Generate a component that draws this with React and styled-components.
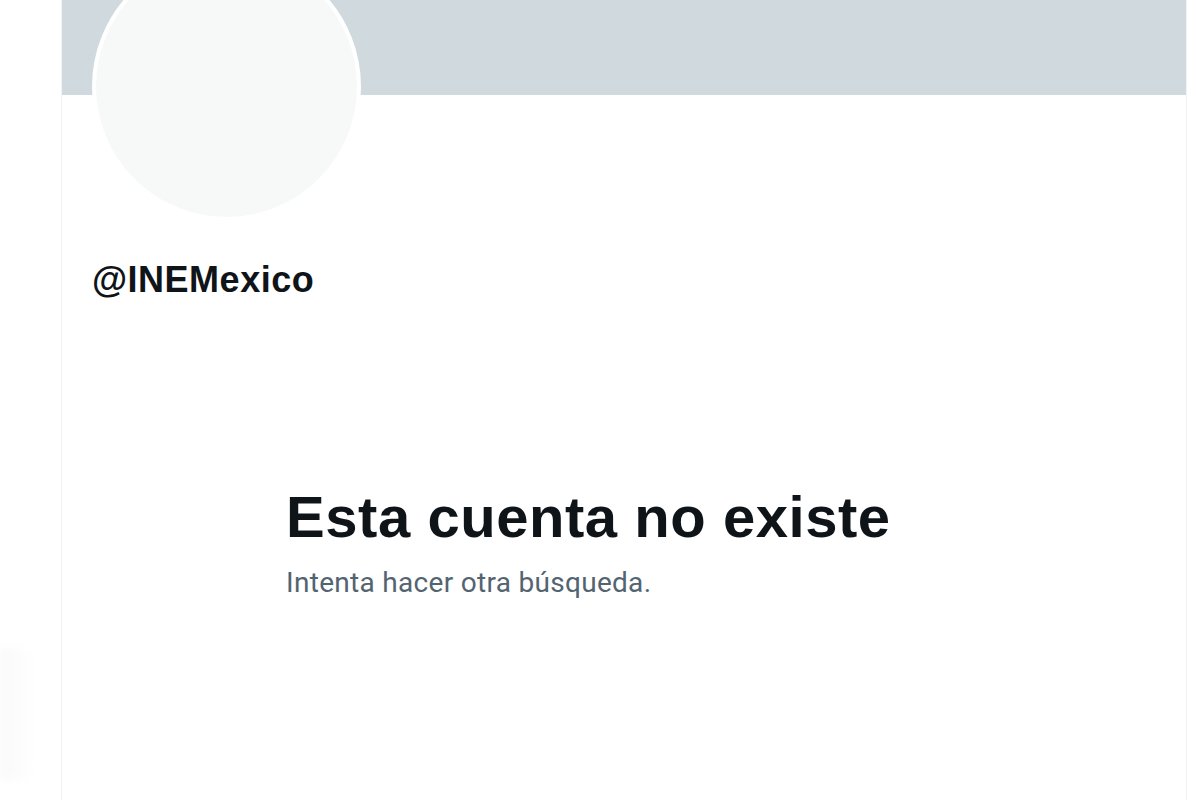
import React from 'react'
import styled, { createGlobalStyle } from 'styled-components'

const GlobalStyle = createGlobalStyle`
    html, body {
        margin:0;
        padding:0;
        background:#ffffff;
    }
    body {
        font-family:"Liberation Sans", Arial, sans-serif;
        color:#0f1419;
    }
`

const Page = styled.div`
    display:flex;
    width:1200px;
    height:800px;
    overflow:hidden;
    background:#ffffff;
`

const Gutter = styled.div`
    width:61px;
    flex-shrink:0;
    display:flex;
    flex-direction:column;
    padding-top:648px;
    box-sizing:border-box;
`

const GhostItem = styled.div`
    width:34px;
    height:132px;
    border-radius:0 14px 14px 0;
    background:linear-gradient(90deg, #f9f9f9, #fdfdfd 70%, #ffffff);
    filter:blur(4px);
`

const Column = styled.main`
    width:1126px;
    flex-shrink:0;
    border-left:1px solid #eff3f4;
    border-right:1px solid #eff3f4;
    box-sizing:border-box;
    display:flex;
    flex-direction:column;
`

const Banner = styled.div`
    height:95px;
    background:#cfd9de;
`

const ProfileHead = styled.div`
    padding-left:30px;
    display:flex;
    flex-direction:column;
    align-items:flex-start;
`

const Avatar = styled.div`
    width:269px;
    height:269px;
    margin-top:-143px;
    border:4px solid #ffffff;
    border-radius:50%;
    background:#f7f9f9;
    box-sizing:border-box;
`

const Handle = styled.h2`
    margin:37px 0 0 0;
    font-size:36px;
    line-height:1.2;
    font-weight:700;
    letter-spacing:0.5px;
    color:#0f1419;
`

const EmptyState = styled.section`
    margin-top:181px;
    padding-left:224px;
    display:flex;
    flex-direction:column;
`

const Title = styled.h1`
    margin:0;
    font-size:58px;
    line-height:1.2;
    font-weight:700;
    color:#0f1419;
    letter-spacing:0.55px;
`

const Subtitle = styled.p`
    margin:14px 0 0 0;
    font-family:Roboto, "Liberation Sans", Arial, sans-serif;
    font-size:28px;
    line-height:1.2;
    letter-spacing:0.3px;
    color:#536471;
`

const App = () => {
  return (
    <>
      <GlobalStyle />
      <Page>
        <Gutter>
          <GhostItem />
        </Gutter>
        <Column>
          <Banner />
          <ProfileHead>
            <Avatar />
            <Handle>@INEMexico</Handle>
          </ProfileHead>
          <EmptyState>
            <Title>Esta cuenta no existe</Title>
            <Subtitle>Intenta hacer otra búsqueda.</Subtitle>
          </EmptyState>
        </Column>
      </Page>
    </>
  )
}

export default App
